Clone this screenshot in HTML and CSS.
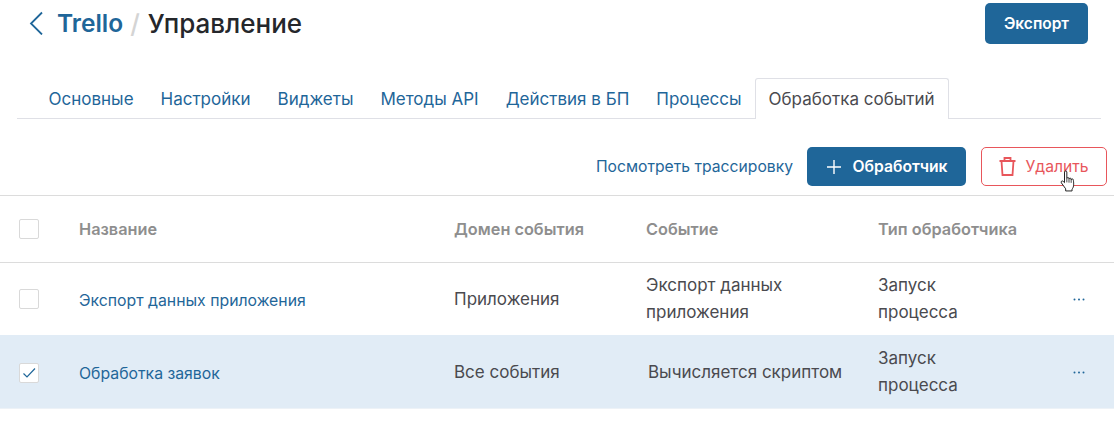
FILE: index.html
```html
<!DOCTYPE html>
<html lang="ru">
<head>
  <meta charset="UTF-8" />
  <title>Trello / Управление</title>
  <link rel="stylesheet" href="styles.css">
</head>
<body>
  <!-- Page header -->
  <header class="page-header">
    <h1 class="title">
      <svg class="back-icon" width="16" height="24" viewBox="0 0 16 24"><path d="M14 1.5 L3 12.5 L14 23.5" fill="none" stroke="#1f6699" stroke-width="1.8"/></svg>
      <span class="title-link">Trello</span>
      <span class="title-sep">/</span>
      <span>Управление</span>
    </h1>
    <button class="btn btn-primary btn-export">Экспорт</button>
  </header>

  <!-- Tabs -->
  <nav class="tabs">
    <a class="tab">Основные</a>
    <a class="tab">Настройки</a>
    <a class="tab">Виджеты</a>
    <a class="tab">Методы API</a>
    <a class="tab">Действия в БП</a>
    <a class="tab">Процессы</a>
    <a class="tab tab-active">Обработка событий</a>
  </nav>

  <!-- Toolbar -->
  <div class="toolbar">
    <a class="trace-link">Посмотреть трассировку</a>
    <button class="btn btn-primary btn-add">
      <svg width="16" height="16" viewBox="0 0 16 16"><path d="M8 1v14M1 8h14" stroke="#fff" stroke-width="1.4"/></svg>
      Обработчик
    </button>
    <button class="btn btn-danger">
      <svg width="17" height="19" viewBox="0 0 17 19"><path d="M.5 4h16M5.500 4V1h6v3M2.500 4l1 14h10l1-14" fill="none" stroke="#e8565b" stroke-width="1.800"/></svg>
      Удалить
      <svg class="hand-cursor" width="18" height="25" viewBox="0 0 20 26"><path d="M5 2.500c0-1.600 2.600-1.600 2.600 0v7.200c0-1.400 2.400-1.400 2.400 0v.6c0-1.400 2.400-1.400 2.400 0v.8c0-1.300 2.400-1.300 2.400 0 0 0 .7 4.500.2 7-.3 1.700-1 2.600-1.600 3.400v2H6.300v-2.400L1.500 14.500c-.9-1.400.8-2.900 2-1.700L5 14.300z" fill="#fff" stroke="#222" stroke-width="1.100" stroke-linejoin="round"/><path d="M7.600 10v4M10 10.300v4M12.400 11v3.500" stroke="#222" stroke-width=".9" fill="none"/></svg>
    </button>
  </div>

  <!-- Table -->
  <div class="table">
    <div class="row row-head">
      <span class="check"></span>
      <span>Название</span>
      <span>Домен события</span>
      <span>Событие</span>
      <span>Тип обработчика</span>
      <span></span>
    </div>
    <div class="row row-before-selected">
      <span class="check"></span>
      <a class="row-link">Экспорт данных приложения</a>
      <span>Приложения</span>
      <span class="cell-event">Экспорт данных приложения</span>
      <span class="cell-type">Запуск процесса</span>
      <svg class="more" width="12" height="3" viewBox="0 0 12 3"><circle cx="1.500" cy="1.500" r="1"/><circle cx="6" cy="1.500" r="1"/><circle cx="10.500" cy="1.500" r="1"/></svg>
    </div>
    <div class="row row-selected">
      <span class="check">
        <svg width="14" height="12" viewBox="0 0 14 12"><path d="M1.500 6.500 L5 10 L13 1.500" fill="none" stroke="#1f6699" stroke-width="1.200"/></svg>
      </span>
      <a class="row-link">Обработка заявок</a>
      <span>Все события</span>
      <span class="cell-event cell-shift">Вычисляется скриптом</span>
      <span class="cell-type">Запуск процесса</span>
      <svg class="more" width="12" height="3" viewBox="0 0 12 3"><circle cx="1.500" cy="1.500" r="1"/><circle cx="6" cy="1.500" r="1"/><circle cx="10.500" cy="1.500" r="1"/></svg>
    </div>
  </div>
</body>
</html>
```

FILE: styles.css
```css
body {
  font-family: 'Inter', 'Roboto', sans-serif;
  font-size: 17px;
  color: #4a4a4f;
  background-color: #fff;
  margin: 0;
  padding: 0;
}
button {
  font-family: inherit;
}
.page-header {
  display: flex;
  justify-content: space-between;
  align-items: flex-start;
  padding: 3px 26px 0 28px;
  height: 78px;
  box-sizing: border-box;
}
.title {
  display: flex;
  align-items: center;
  margin: 0;
  height: 40px;
  font-size: 26px;
  font-weight: 500;
  color: #25272b;
}
.back-icon {
  margin-right: 13px;
}
.title-link {
  color: #1f6699;
  font-size: 24.500px;
  font-weight: 600;
}
.title-sep {
  color: #d4d4d4;
  margin: 0 8px 0 7px;
}
.btn {
  display: flex;
  align-items: center;
  justify-content: center;
  border-radius: 5px;
  font-size: 15.500px;
  font-weight: 600;
  cursor: pointer;
  box-sizing: border-box;
}
.btn-primary {
  background-color: #1f6699;
  color: #fff;
  border: none;
}
.btn-export {
  width: 103px;
  height: 41px;
}
.tabs {
  display: flex;
  margin: 0 13px 0 17px;
  padding-left: 18px;
  height: 41px;
  box-sizing: border-box;
  border-bottom: 1px solid #dfe0e6;
}
.tab {
  padding: 2px 13.500px 0;
  line-height: 39px;
  color: #1f6699;
  white-space: nowrap;
}
.tab-active {
  height: 41px;
  box-sizing: border-box;
  line-height: 39px;
  padding: 1px 13px 0 12.500px;
  background-color: #fff;
  color: #4a4a4f;
  border: 1px solid #dfe0e6;
  border-bottom: none;
  border-radius: 3px 3px 0 0;
}
.toolbar {
  display: flex;
  justify-content: flex-end;
  align-items: flex-end;
  gap: 15px;
  height: 77px;
  padding: 0 7px 9px 0;
  box-sizing: border-box;
  border-bottom: 1px solid #dcdcdc;
}
.trace-link {
  color: #1f6699;
  font-size: 15.700px;
  line-height: 39px;
  margin-right: -1px;
}
.btn-add {
  width: 159px;
  height: 39px;
  gap: 11px;
  font-size: 15.700px;
}
.btn-danger {
  position: relative;
  width: 126px;
  height: 39px;
  gap: 9px;
  background-color: #fff;
  border: 1px solid #e8565b;
  color: #e8565b;
  font-size: 15.700px;
  font-weight: 400;
}
.hand-cursor {
  position: absolute;
  left: 78px;
  top: 21px;
}
.row {
  display: grid;
  grid-template-columns: 79px 375px 192px 232px 176px 60px;
  align-items: center;
  height: 73px;
  box-sizing: border-box;
  border-bottom: 1px solid #e4e4e4;
  line-height: 27px;
}
.row > :first-child {
  margin-left: 19px;
}
.row-head {
  height: 67px;
  border-bottom-color: #dcdcdc;
  color: #8e8e8e;
  font-size: 16.300px;
  font-weight: 600;
}
.row-before-selected {
  border-bottom-color: #e1ecf6;
}
.row-selected {
  background-color: #e1ecf6;
  border-bottom-color: #edf2f7;
}
.row-selected .check,
.row-selected .row-link {
  margin-top: 2px;
}
.row-link {
  color: #1f6699;
  font-size: 15.800px;
  margin-top: 2px;
}
.check {
  display: flex;
  align-items: center;
  justify-content: center;
  width: 20px;
  height: 20px;
  box-sizing: border-box;
  background-color: #fff;
  border: 1px solid #d9d9d9;
  border-radius: 2px;
}
.cell-event {
  width: 195px;
}
.cell-type {
  width: 110px;
}
.cell-shift {
  margin-left: 2px;
}
.more {
  fill: #1f6699;
  margin-left: 19px;
}
```
